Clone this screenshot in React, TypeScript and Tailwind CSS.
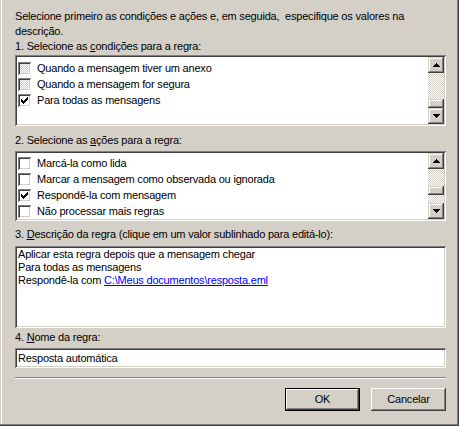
import type { ReactNode } from "react";

const sunken =
  "shadow-[inset_1px_1px_0_#808080,inset_-1px_-1px_0_#ffffff,inset_2px_2px_0_#404040,inset_-2px_-2px_0_#d4d0c8]";
const raised =
  "shadow-[inset_-1px_-1px_0_#404040,inset_1px_1px_0_#d4d0c8,inset_-2px_-2px_0_#808080,inset_2px_2px_0_#ffffff]";
const dither =
  "[background-image:repeating-conic-gradient(#d4d0c8_0_25%,#ffffff_0_50%)] [background-size:2px_2px]";

const checkPath =
  "M6 0h1v1h-1z M5 1h2v1h-2z M0 2h1v1h-1z M4 2h3v1h-3z M0 3h2v1h-2z M3 3h3v1h-3z M0 4h5v1h-5z M1 5h3v1h-3z M2 6h1v1h-1z";

type CheckState = "off" | "on" | "disabled";

function CheckBox({ state }: { state: CheckState }) {
  return (
    <div className={`w-[13px] h-[13px] p-[2px] shrink-0 ${sunken}`}>
      <div
        className={`w-[9px] h-[9px] flex items-center justify-center ${
          state === "disabled" ? dither : "bg-white"
        }`}
      >
        {state === "on" && (
          <svg width="7" height="7" viewBox="0 0 7 7" shapeRendering="crispEdges">
            <path d={checkPath} fill="#000" />
          </svg>
        )}
      </div>
    </div>
  );
}

function Arrow({ down }: { down?: boolean }) {
  return (
    <svg width="7" height="4" viewBox="0 0 7 4" shapeRendering="crispEdges">
      <path
        d={
          down
            ? "M0 0h7v1h-7z M1 1h5v1h-5z M2 2h3v1h-3z M3 3h1v1h-1z"
            : "M3 0h1v1h-1z M2 1h3v1h-3z M1 2h5v1h-5z M0 3h7v1h-7z"
        }
        fill="#000"
      />
    </svg>
  );
}

function ScrollBar({ thumbTop }: { thumbTop: number | "end" }) {
  return (
    <div className="w-[16px] flex flex-col shrink-0">
      <div className={`h-[16px] bg-[#d4d0c8] flex items-center justify-center ${raised}`}>
        <Arrow />
      </div>
      <div className={`flex-1 flex flex-col ${dither}`}>
        {thumbTop === "end" ? (
          <div className={`mt-auto h-[9px] bg-[#d4d0c8] ${raised}`} />
        ) : (
          <div className={`h-[9px] bg-[#d4d0c8] ${raised}`} style={{ marginTop: thumbTop }} />
        )}
      </div>
      <div className={`h-[16px] bg-[#d4d0c8] flex items-center justify-center ${raised}`}>
        <Arrow down />
      </div>
    </div>
  );
}

function Row({ state, children }: { state: CheckState; children: ReactNode }) {
  return (
    <div className="flex h-[16px] items-center pl-px">
      <CheckBox state={state} />
      <span className="ml-[6px] whitespace-nowrap leading-[13px]">{children}</span>
    </div>
  );
}

const conditions: { label: string; state: CheckState }[] = [
  { label: "Quando a mensagem tiver um anexo", state: "disabled" },
  { label: "Quando a mensagem for segura", state: "disabled" },
  { label: "Para todas as mensagens", state: "on" },
];

const actions: { label: string; state: CheckState }[] = [
  { label: "Marcá-la como lida", state: "off" },
  { label: "Marcar a mensagem como observada ou ignorada", state: "off" },
  { label: "Respondê-la com mensagem", state: "on" },
  { label: "Não processar mais regras", state: "off" },
];

function Button({ children, isDefault }: { children: ReactNode; isDefault?: boolean }) {
  if (isDefault) {
    return (
      <div className="w-[75px] h-[23px] border border-black">
        <div className="w-full h-full flex items-center justify-center shadow-[inset_-1px_-1px_0_#404040,inset_1px_1px_0_#ffffff,inset_-2px_-2px_0_#808080]">
          {children}
        </div>
      </div>
    );
  }
  return (
    <div className="w-[75px] h-[23px] flex items-center justify-center shadow-[inset_-1px_-1px_0_#404040,inset_1px_1px_0_#ffffff,inset_-2px_-2px_0_#808080]">
      {children}
    </div>
  );
}

export default function App() {
  return (
    <div className="w-[459px] h-[426px] bg-[#d4d0c8] text-black text-[11px] tracking-[-0.2px] font-['Liberation_Sans',Arial,sans-serif] shadow-[inset_-1px_-1px_0_#404040,inset_-2px_-2px_0_#808080,inset_1px_0_0_#d4d0c8,inset_2px_0_0_#ffffff] overflow-hidden">
      <div className="pl-[15px] pr-[13px] pt-[9px] flex flex-col">
        <p className="leading-[15px] whitespace-nowrap">
          Selecione primeiro as condições e ações e, em seguida,&nbsp; especifique os valores na
          <br />
          descrição.
        </p>
        <div className="leading-[15px] h-[15px]">
          1. Selecione as <span className="underline">c</span>ondições para a regra:
        </div>
        <div className={`mt-px h-[71px] p-[2px] flex ${sunken}`}>
          <div className="flex-1 bg-white overflow-hidden pt-[3px]">
            {conditions.map((c) => (
              <Row key={c.label} state={c.state}>
                {c.label}
              </Row>
            ))}
          </div>
          <ScrollBar thumbTop="end" />
        </div>

        <div className="mt-[7px] leading-[15px] h-[15px]">
          2. Selecione as <span className="underline">a</span>ções para a regra:
        </div>
        <div className={`mt-[3px] h-[70px] p-[2px] flex ${sunken}`}>
          <div className="flex-1 bg-white overflow-hidden pt-[2px]">
            {actions.map((a) => (
              <Row key={a.label} state={a.state}>
                {a.label}
              </Row>
            ))}
          </div>
          <ScrollBar thumbTop={17} />
        </div>

        <div className="mt-[6px] leading-[15px] h-[15px] whitespace-nowrap">
          3. <span className="underline">D</span>escrição da regra (clique em um valor sublinhado para editá-lo):
        </div>
        <div className={`mt-[4px] h-[82px] p-[2px] flex ${sunken}`}>
          <div className="flex-1 bg-white pl-px leading-[13px]">
            <div>Aplicar esta regra depois que a mensagem chegar</div>
            <div>Para todas as mensagens</div>
            <div>
              Respondê-la com{" "}
              <span className="text-[#0000ff] underline">C:\Meus documentos\resposta.eml</span>
            </div>
          </div>
        </div>

        <div className="mt-[2px] leading-[15px] h-[15px]">
          4. <span className="underline">N</span>ome da regra:
        </div>
        <div className={`mt-[3px] h-[20px] p-[2px] flex ${sunken}`}>
          <div className="flex-1 bg-white pl-px leading-[16px]">Resposta automática</div>
        </div>

        <div className="mt-[9px] h-px bg-[#808080]" />
        <div className="h-px bg-white" />

        <div className="mt-[9px] flex justify-end gap-[11px]">
          <Button isDefault>OK</Button>
          <Button>Cancelar</Button>
        </div>
      </div>
    </div>
  );
}
